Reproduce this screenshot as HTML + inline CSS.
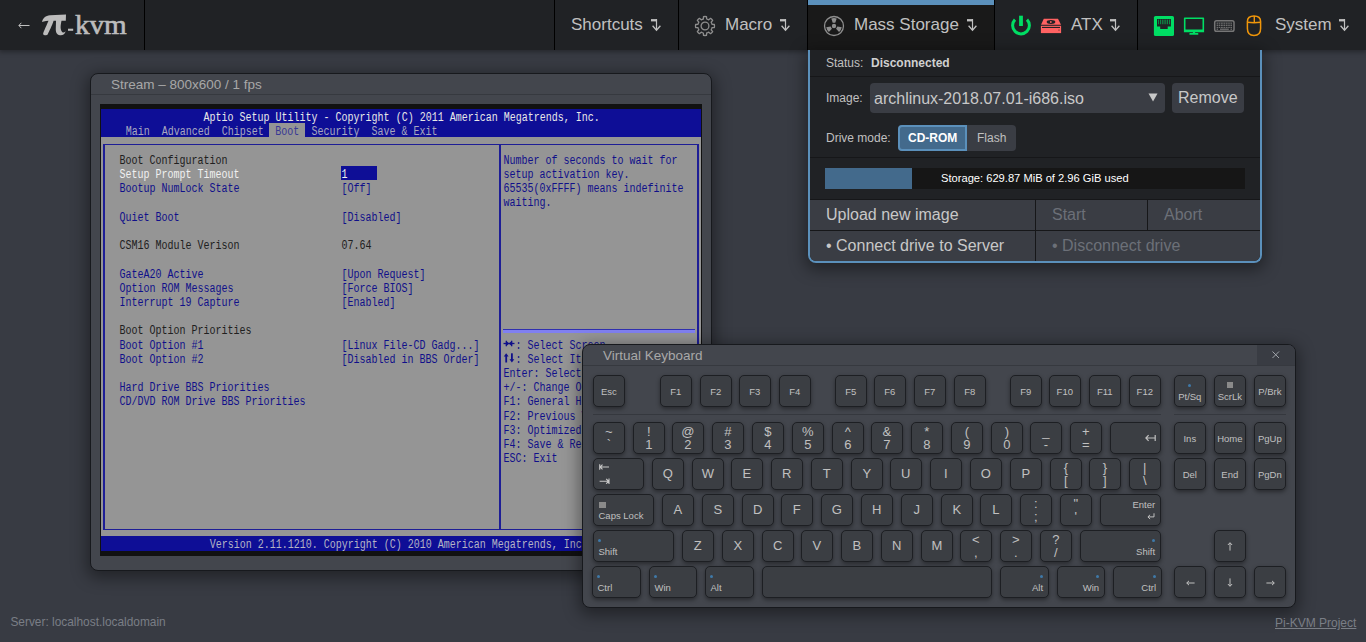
<!DOCTYPE html>
<html><head><meta charset="utf-8">
<style>
*{box-sizing:border-box;margin:0;padding:0}
html,body{width:1366px;height:642px;overflow:hidden;background:#383b43;font-family:"Liberation Sans", sans-serif;color:#c0c0c0}
.a{position:absolute}
.t{position:absolute;white-space:pre;line-height:1}
.key{position:absolute;background:#3b3e43;border:1px solid #1d1f23;border-radius:5px;box-shadow:0 2px 4px 0 rgba(0,0,0,0.4);color:#c0c0c0}
.bios{position:absolute;white-space:pre;font-family:"Liberation Mono", monospace;font-size:10px;line-height:10px;transform-origin:0 7.67px;transform:scaleY(1.2)}
</style></head><body>

<div class="a" style="left:0;top:0;width:1366px;height:50px;background:#202225;box-shadow:0 1px 5px 1px rgba(0,0,0,0.35)"></div>
<svg class="a" style="left:18px;top:22px" width="12" height="7" viewBox="0 0 12 7"><path d="M1 3.5 H11.5" stroke="#c0c0c0" stroke-width="1"/><path d="M3.3 0.8 L0.9 3.5 L3.3 6.2" fill="none" stroke="#c0c0c0" stroke-width="1"/></svg>
<svg class="a" style="left:36px;top:8px" width="96" height="34" viewBox="0 0 960 340">
<path fill="#bcbcbc" d="M60 140 C70 100 95 75 140 72 L300 66 L298 128 L255 128 C245 175 240 215 262 240 C272 250 285 245 296 232 C290 262 268 275 240 272 C205 268 196 240 198 200 L200 128 L176 128 C160 180 130 235 118 262 C110 275 80 278 72 262 C68 250 95 200 125 128 L100 130 C85 130 70 138 60 140 Z"/>
<rect x="320" y="207" width="52" height="21" fill="#bcbcbc"/></svg>
<div class="t" style="left:74.5px;top:11px;font-family:'Liberation Serif',serif;font-size:26px;color:#bcbcbc;-webkit-text-stroke:0.6px #bcbcbc;transform:scale(1.12,1.08);transform-origin:0 0">kvm</div>
<div class="a" style="left:144px;top:0;width:1px;height:50px;background:#000"></div>
<div class="a" style="left:554px;top:0;width:1px;height:50px;background:#000"></div>
<div class="a" style="left:678px;top:0;width:1px;height:50px;background:#000"></div>
<div class="a" style="left:807px;top:0;width:1px;height:50px;background:#000"></div>
<div class="a" style="left:994px;top:0;width:1px;height:50px;background:#000"></div>
<div class="a" style="left:1137px;top:0;width:1px;height:50px;background:#000"></div>
<div class="a" style="left:808px;top:0;width:186px;height:50px;background:#191919"></div>
<div class="a" style="left:808px;top:0;width:186px;height:5px;background:#5b90bb"></div>
<div class="t" style="left:571px;top:16px;font-size:17px;color:#c0c0c0">Shortcuts</div>
<svg style="position:absolute;left:651px;top:18px" width="10" height="14" viewBox="0 0 10 14"><rect x="0" y="1.1" width="6" height="2.3" fill="#c0c0c0"/><rect x="4.9" y="1.1" width="1.2" height="11" fill="#c0c0c0"/><path d="M1.6 7.8 L5.5 12.2 L9.4 7.8" fill="none" stroke="#c0c0c0" stroke-width="1.3"/></svg>
<div class="t" style="left:725px;top:16px;font-size:17px;color:#c0c0c0">Macro</div>
<svg style="position:absolute;left:780px;top:18px" width="10" height="14" viewBox="0 0 10 14"><rect x="0" y="1.1" width="6" height="2.3" fill="#c0c0c0"/><rect x="4.9" y="1.1" width="1.2" height="11" fill="#c0c0c0"/><path d="M1.6 7.8 L5.5 12.2 L9.4 7.8" fill="none" stroke="#c0c0c0" stroke-width="1.3"/></svg>
<div class="t" style="left:854px;top:16px;font-size:17px;color:#c0c0c0">Mass Storage</div>
<svg style="position:absolute;left:967px;top:18px" width="10" height="14" viewBox="0 0 10 14"><rect x="0" y="1.1" width="6" height="2.3" fill="#c0c0c0"/><rect x="4.9" y="1.1" width="1.2" height="11" fill="#c0c0c0"/><path d="M1.6 7.8 L5.5 12.2 L9.4 7.8" fill="none" stroke="#c0c0c0" stroke-width="1.3"/></svg>
<div class="t" style="left:1071px;top:16px;font-size:17px;color:#c0c0c0">ATX</div>
<svg style="position:absolute;left:1110px;top:18px" width="10" height="14" viewBox="0 0 10 14"><rect x="0" y="1.1" width="6" height="2.3" fill="#c0c0c0"/><rect x="4.9" y="1.1" width="1.2" height="11" fill="#c0c0c0"/><path d="M1.6 7.8 L5.5 12.2 L9.4 7.8" fill="none" stroke="#c0c0c0" stroke-width="1.3"/></svg>
<div class="t" style="left:1275px;top:16px;font-size:17px;color:#c0c0c0">System</div>
<svg style="position:absolute;left:1339px;top:18px" width="10" height="14" viewBox="0 0 10 14"><rect x="0" y="1.1" width="6" height="2.3" fill="#c0c0c0"/><rect x="4.9" y="1.1" width="1.2" height="11" fill="#c0c0c0"/><path d="M1.6 7.8 L5.5 12.2 L9.4 7.8" fill="none" stroke="#c0c0c0" stroke-width="1.3"/></svg>
<svg class="a" style="left:694px;top:15px" width="22" height="22" viewBox="0 0 22 22">
<g fill="none" stroke="#8e8e8e" stroke-width="1.3" stroke-linejoin="round">
<path d="M8.25 4.35 A7.2 7.2 0 0 1 9.32 4.00 L9.51 1.62 A9.5 9.5 0 0 1 12.49 1.62 L12.68 4.00 L13.76 4.35 A7.2 7.2 0 0 1 14.76 4.86 L16.58 3.31 A9.5 9.5 0 0 1 18.69 5.42 L17.14 7.24 L17.65 8.25 A7.2 7.2 0 0 1 18.00 9.32 L20.38 9.51 A9.5 9.5 0 0 1 20.38 12.49 L18.00 12.68 L17.65 13.76 A7.2 7.2 0 0 1 17.14 14.76 L18.69 16.58 A9.5 9.5 0 0 1 16.58 18.69 L14.76 17.14 L13.75 17.65 A7.2 7.2 0 0 1 12.68 18.00 L12.49 20.38 A9.5 9.5 0 0 1 9.51 20.38 L9.32 18.00 L8.24 17.65 A7.2 7.2 0 0 1 7.24 17.14 L5.42 18.69 A9.5 9.5 0 0 1 3.31 16.58 L4.86 14.76 L4.35 13.75 A7.2 7.2 0 0 1 4.00 12.68 L1.62 12.49 A9.5 9.5 0 0 1 1.62 9.51 L4.00 9.32 L4.35 8.24 A7.2 7.2 0 0 1 4.86 7.24 L3.31 5.42 A9.5 9.5 0 0 1 5.42 3.31 L7.24 4.86 Z"/>
<circle cx="11" cy="11" r="3.9"/></g></svg>
<svg class="a" style="left:823px;top:15px" width="22" height="22" viewBox="0 0 22 22">
<circle cx="11" cy="11" r="9.5" fill="none" stroke="#8e8e8e" stroke-width="1.3"/>
<g fill="#8e8e8e"><path d="M9.73 7.85 L8.30 3.58 A7.9 7.9 0 0 1 13.70 3.58 L12.27 7.85 Z"/><path d="M14.37 11.47 L18.78 12.37 A7.9 7.9 0 0 1 16.08 17.05 L13.09 13.68 Z"/><path d="M8.91 13.68 L5.92 17.05 A7.9 7.9 0 0 1 3.22 12.37 L7.63 11.47 Z"/><circle cx="11" cy="11" r="2.2"/></g></svg>
<svg class="a" style="left:1010px;top:15px" width="22" height="22" viewBox="0 0 22 22">
<path d="M5.0 4.6 A8.4 8.4 0 1 0 17.0 4.6" fill="none" stroke="#00de64" stroke-width="3"/>
<rect x="9.1" y="0.7" width="3.8" height="10.3" fill="#00de64"/></svg>
<svg class="a" style="left:1040px;top:18px" width="22" height="16" viewBox="0 0 22 16">
<path d="M3.8 0.8 H18 L21 6.7 H1 Z" fill="#ff6262"/>
<rect x="0.9" y="7.8" width="20.2" height="7.3" fill="#ff6262"/>
<ellipse cx="11" cy="4" rx="4.3" ry="1.9" fill="#202225"/><rect x="10" y="3.2" width="1.6" height="1.6" fill="#ff6262"/>
<rect x="2" y="8.9" width="18" height="1.1" fill="#202225"/><circle cx="19" cy="12" r="0.6" fill="#202225"/></svg>
<svg class="a" style="left:1153px;top:15px" width="22" height="22" viewBox="0 0 22 22">
<rect x="0.9" y="0.9" width="20.1" height="20.1" rx="1.6" fill="#00de64"/>
<path d="M4 4 h13.9 v7.6 h-3.2 v2.4 h-7.5 v-2.4 h-3.2z" fill="#202225"/>
<g fill="#00de64" opacity="0.75"><rect x="5.3" y="4.6" width="0.7" height="4.6"/><rect x="7.1" y="4.6" width="0.7" height="4.6"/><rect x="8.9" y="4.6" width="0.7" height="4.6"/><rect x="10.7" y="4.6" width="0.7" height="4.6"/><rect x="12.5" y="4.6" width="0.7" height="4.6"/><rect x="14.3" y="4.6" width="0.7" height="4.6"/><rect x="16.1" y="4.6" width="0.7" height="4.6"/></g></svg>
<svg class="a" style="left:1183px;top:17px" width="22" height="19" viewBox="0 0 22 19">
<path d="M1.6 0.4 H20.4 Q21.1 0.4 21.1 1.1 V15.2 H0.9 V1.1 Q0.9 0.4 1.6 0.4 Z M2.5 1.9 V12.4 H19.5 V1.9 Z" fill="#00de64" fill-rule="evenodd"/>
<rect x="9.9" y="15" width="2.2" height="1.4" fill="#00de64"/><rect x="6.4" y="16.1" width="8.9" height="1.6" rx="0.5" fill="#00de64"/></svg>
<svg class="a" style="left:1213px;top:19px" width="22" height="14" viewBox="0 0 22 14">
<rect x="1.7" y="1.8" width="19.3" height="10.5" rx="1.8" fill="none" stroke="#767676" stroke-width="1.5"/>
<g fill="#767676"><rect x="3.6" y="3.6" width="15.4" height="1.1"/><rect x="3.6" y="5.6" width="15.4" height="1.3"/><rect x="3.6" y="7.8" width="15.4" height="1.1"/><rect x="7" y="9.6" width="8.8" height="1.2"/><rect x="3.6" y="9.6" width="1.5" height="1.2"/><rect x="17.5" y="9.6" width="1.5" height="1.2"/></g>
<g fill="#202225"><rect x="5" y="3.4" width="0.6" height="5.6"/><rect x="7.4" y="3.4" width="0.6" height="5.6"/><rect x="9.8" y="3.4" width="0.6" height="5.6"/><rect x="12.2" y="3.4" width="0.6" height="5.6"/><rect x="14.6" y="3.4" width="0.6" height="5.6"/><rect x="16.8" y="3.4" width="0.6" height="5.6"/></g></svg>
<svg class="a" style="left:1246px;top:15px" width="16" height="22" viewBox="0 0 16 22">
<path d="M8 1 C12.5 1 14.6 2.5 14.6 6.5 V13.5 C14.6 18.2 12 20.5 8 20.5 C4 20.5 1.4 18.2 1.4 13.5 V6.5 C1.4 2.5 3.5 1 8 1 Z" fill="none" stroke="#f0960a" stroke-width="1.5"/>
<path d="M1.4 7.3 Q8 8.2 14.6 7.3 M8.3 1 V7.8" fill="none" stroke="#f0960a" stroke-width="1.4"/></svg>
<div class="a" style="left:90px;top:73px;width:622px;height:498px;background:#43464d;border:1px solid #17191d;border-radius:8px;box-shadow:0 4px 16px 3px rgba(0,0,0,0.4)"></div>
<div class="a" style="left:91px;top:94px;width:620px;height:1px;background:#36393f"></div>
<div class="t" style="left:111px;top:78px;font-size:13.5px;color:#a8a8a8">Stream – 800x600 / 1 fps</div>
<div class="a" style="left:100px;top:104px;width:602px;height:452px;background:#111;overflow:hidden">
<div class="a" style="left:1px;top:5px;width:600px;height:28px;background:#0e0e96"></div>
<div class="a" style="left:1px;top:33px;width:600px;height:399px;background:#959595"></div>
<div class="a" style="left:1px;top:432px;width:600px;height:14.5px;background:#0e0e96"></div>
<div class="a" style="left:169px;top:19px;width:36px;height:14px;background:#959595"></div>
<div class="a" style="left:3.3px;top:40px;width:595.4px;height:1.4px;background:#1e1e96"></div>
<div class="a" style="left:3.3px;top:40px;width:2px;height:386px;background:#1e1e96"></div>
<div class="a" style="left:3.3px;top:424.8px;width:595.4px;height:1.3px;background:#1e1e96"></div>
<div class="a" style="left:597.1px;top:40px;width:1.6px;height:386px;background:#1e1e96"></div>
<div class="a" style="left:399px;top:40px;width:2px;height:386px;background:#1e1e96"></div>
<div class="a" style="left:403px;top:224.5px;width:192px;height:1px;background:#3030b0"></div>
<div class="a" style="left:403px;top:226px;width:192px;height:3px;background:#8080f0"></div>
<div class="a" style="left:241px;top:62px;width:36px;height:14px;background:#0e0e96"></div>
<div class="bios" style="left:103.6px;top:9.93px;color:#e8e8e8">Aptio Setup Utility - Copyright (C) 2011 American Megatrends, Inc.</div>
<div class="bios" style="left:25.7px;top:24.03px;color:#a8a8c0">Main  Advanced  Chipset</div>
<div class="bios" style="left:175.3px;top:24.03px;color:#383894">Boot</div>
<div class="bios" style="left:211.4px;top:24.03px;color:#a8a8c0">Security  Save &amp; Exit</div>
<div class="bios" style="left:19.5px;top:52.83px;color:#202020">Boot Configuration</div>
<div class="bios" style="left:19.5px;top:67.04px;color:#f0f0f0">Setup Prompt Timeout</div>
<div class="bios" style="left:241.5px;top:67.04px;color:#f0f0f0">1</div>
<div class="bios" style="left:19.5px;top:81.25px;color:#10108a">Bootup NumLock State</div>
<div class="bios" style="left:241.5px;top:81.25px;color:#10108a">[Off]</div>
<div class="bios" style="left:19.5px;top:109.67px;color:#10108a">Quiet Boot</div>
<div class="bios" style="left:241.5px;top:109.67px;color:#10108a">[Disabled]</div>
<div class="bios" style="left:19.5px;top:138.09px;color:#202020">CSM16 Module Verison</div>
<div class="bios" style="left:241.5px;top:138.09px;color:#202020">07.64</div>
<div class="bios" style="left:19.5px;top:166.51px;color:#10108a">GateA20 Active</div>
<div class="bios" style="left:241.5px;top:166.51px;color:#10108a">[Upon Request]</div>
<div class="bios" style="left:19.5px;top:180.72px;color:#10108a">Option ROM Messages</div>
<div class="bios" style="left:241.5px;top:180.72px;color:#10108a">[Force BIOS]</div>
<div class="bios" style="left:19.5px;top:194.93px;color:#10108a">Interrupt 19 Capture</div>
<div class="bios" style="left:241.5px;top:194.93px;color:#10108a">[Enabled]</div>
<div class="bios" style="left:19.5px;top:223.35px;color:#202020">Boot Option Priorities</div>
<div class="bios" style="left:19.5px;top:237.56px;color:#10108a">Boot Option #1</div>
<div class="bios" style="left:241.5px;top:237.56px;color:#10108a">[Linux File-CD Gadg...]</div>
<div class="bios" style="left:19.5px;top:251.77px;color:#10108a">Boot Option #2</div>
<div class="bios" style="left:241.5px;top:251.77px;color:#10108a">[Disabled in BBS Order]</div>
<div class="bios" style="left:19.5px;top:280.19px;color:#10108a">Hard Drive BBS Priorities</div>
<div class="bios" style="left:19.5px;top:294.40px;color:#10108a">CD/DVD ROM Drive BBS Priorities</div>
<div class="bios" style="left:403.6px;top:52.83px;color:#10108a">Number of seconds to wait for</div>
<div class="bios" style="left:403.6px;top:67.04px;color:#10108a">setup activation key.</div>
<div class="bios" style="left:403.6px;top:81.25px;color:#10108a">65535(0xFFFF) means indefinite</div>
<div class="bios" style="left:403.6px;top:95.46px;color:#10108a">waiting.</div>
<div class="bios" style="left:403.6px;top:237.56px;color:#10108a">  : Select Screen</div>
<div class="bios" style="left:403.6px;top:251.77px;color:#10108a">  : Select Item</div>
<div class="bios" style="left:403.6px;top:265.98px;color:#10108a">Enter: Select</div>
<div class="bios" style="left:403.6px;top:280.19px;color:#10108a">+/-: Change Opt.</div>
<div class="bios" style="left:403.6px;top:294.40px;color:#10108a">F1: General Help</div>
<div class="bios" style="left:403.6px;top:308.61px;color:#10108a">F2: Previous Values</div>
<div class="bios" style="left:403.6px;top:322.82px;color:#10108a">F3: Optimized Defaults</div>
<div class="bios" style="left:403.6px;top:337.03px;color:#10108a">F4: Save &amp; Reset</div>
<div class="bios" style="left:403.6px;top:351.24px;color:#10108a">ESC: Exit</div>
<svg class="a" style="left:403px;top:235px" width="12" height="9" viewBox="0 0 12 9"><g fill="none" stroke="#10108a" stroke-width="1.3"><path d="M0.5 4.5 H11.5"/><path d="M3.3 1.8 V7.2 M8.7 1.8 V7.2"/></g><g fill="#10108a"><path d="M3.2 1.7 L6.2 4.5 L3.2 7.3Z"/><path d="M8.8 1.7 L5.8 4.5 L8.8 7.3Z"/></g></svg>
<svg class="a" style="left:403px;top:248.5px" width="12" height="10" viewBox="0 0 12 10"><g fill="#10108a"><rect x="2.3" y="2.5" width="1.8" height="7"/><path d="M0.8 3.5 L3.2 0.3 L5.6 3.5Z"/><rect x="8" y="0.3" width="1.8" height="7"/><path d="M6.5 6.3 L8.9 9.5 L11.3 6.3Z"/></g></svg>
<div class="bios" style="left:109.7px;top:437.43px;color:#b4b4c4">Version 2.11.1210. Copyright (C) 2010 American Megatrends, Inc.</div>
</div>
<div class="a" style="left:808px;top:50px;width:454px;height:213px;background:#202225;border:2px solid #5b90bb;border-top:none;border-radius:0 0 8px 8px;box-shadow:0 4px 16px 3px rgba(0,0,0,0.4);overflow:hidden">
<div class="a" style="left:0;top:26px;width:450px;height:1px;background:#161719"></div>
<div class="t" style="left:16px;top:4px"><span style="font-size:12px;color:#c0c0c0">Status:</span></div>
<div class="t" style="left:61px;top:4px"><span style="font-size:12px;font-weight:bold;color:#d0d0d0">Disconnected</span></div>
<div class="t" style="left:16px;top:39px"><span style="font-size:12px;color:#c0c0c0">Image:</span></div>
<div class="a" style="left:60px;top:33px;width:295px;height:30px;background:#3a3d44;border-radius:4px"></div>
<div class="t" style="left:64px;top:41px"><span style="font-size:16px;color:#c8c8c8">archlinux-2018.07.01-i686.iso</span></div>
<svg class="a" style="left:338px;top:43px" width="10" height="9" viewBox="0 0 10 9"><path d="M0.5 0.5 H9.5 L5 8.5z" fill="#c8c8c8"/></svg>
<div class="a" style="left:362px;top:33px;width:72px;height:30px;background:#3a3d44;border-radius:4px"></div>
<div class="t" style="left:368px;top:40px"><span style="font-size:16px;color:#c8c8c8">Remove</span></div>
<div class="t" style="left:16px;top:79px"><span style="font-size:12px;color:#c0c0c0">Drive mode:</span></div>
<div class="a" style="left:88px;top:75px;width:118px;height:26px;background:#3a3d44;border-radius:4px"></div>
<div class="a" style="left:88px;top:75px;width:69px;height:26px;background:#436a8c;border:2px solid #5b90bb;border-radius:4px 0 0 4px"></div>
<div class="t" style="left:98px;top:79px"><span style="font-size:12px;font-weight:bold;color:#ffffff">CD-ROM</span></div>
<div class="t" style="left:167px;top:79px"><span style="font-size:12px;color:#c0c0c0">Flash</span></div>
<div class="a" style="left:0;top:107px;width:450px;height:1px;background:#161719"></div>
<div class="a" style="left:15px;top:118px;width:420px;height:21px;background:#161616"></div>
<div class="a" style="left:15px;top:118px;width:87px;height:21px;background:#436a8c"></div>
<div class="t" style="left:131px;top:119px"><span style="font-size:11.15px;color:#ffffff">Storage: 629.87 MiB of 2.96 GiB used</span></div>
<div class="a" style="left:0;top:149px;width:450px;height:63px;background:#3a3d44"></div>
<div class="a" style="left:0;top:149px;width:450px;height:1px;background:#161719"></div>
<div class="a" style="left:0;top:180px;width:450px;height:1px;background:#161719"></div>
<div class="a" style="left:225px;top:149px;width:1px;height:63px;background:#161719"></div>
<div class="a" style="left:337px;top:149px;width:1px;height:32px;background:#161719"></div>
<div class="t" style="left:16px;top:157px"><span style="font-size:16px;color:#c8c8c8">Upload new image</span></div>
<div class="t" style="left:242px;top:157px"><span style="font-size:16px;color:#6c7078">Start</span></div>
<div class="t" style="left:354px;top:157px"><span style="font-size:16px;color:#6c7078">Abort</span></div>
<div class="t" style="left:16px;top:188px"><span style="font-size:16px;color:#c8c8c8">• Connect drive to Server</span></div>
<div class="t" style="left:242px;top:188px"><span style="font-size:16px;color:#6c7078">• Disconnect drive</span></div>
</div>
<div class="a" style="left:582px;top:344px;width:714px;height:264px;background:#43464d;border:1px solid #17191d;border-radius:8px;box-shadow:0 4px 16px 3px rgba(0,0,0,0.4);overflow:hidden">
<div class="a" style="left:0;top:20px;width:712px;height:1px;background:#36393f"></div>
<div class="a" style="left:674px;top:0;width:38px;height:20px;background:#393c43"></div>
</div>
<div class="t" style="left:603px;top:349px;font-size:13.5px;color:#a8a8a8">Virtual Keyboard</div>
<svg class="a" style="left:1272px;top:350.5px" width="7.5" height="7.5" viewBox="0 0 7.5 7.5"><path d="M0.5 0.5 L7 7 M7 0.5 L0.5 7" stroke="#a0a4aa" stroke-width="1"/></svg>
<div class="a" style="left:593px;top:414px;width:568px;height:1px;background:#35383e"></div>
<div class="a" style="left:1174px;top:414px;width:112px;height:1px;background:#35383e"></div>
<div class="key" style="left:593.0px;top:375.0px;width:31.6px;height:31.6px"><div style="position:absolute;left:-1px;right:-1px;top:11.36px;text-align:center;font-size:9.5px;line-height:1">Esc</div></div>
<div class="key" style="left:660.0px;top:375.0px;width:31.6px;height:31.6px"><div style="position:absolute;left:-1px;right:-1px;top:11.36px;text-align:center;font-size:9.5px;line-height:1">F1</div></div>
<div class="key" style="left:700.0px;top:375.0px;width:31.6px;height:31.6px"><div style="position:absolute;left:-1px;right:-1px;top:11.36px;text-align:center;font-size:9.5px;line-height:1">F2</div></div>
<div class="key" style="left:739.0px;top:375.0px;width:31.6px;height:31.6px"><div style="position:absolute;left:-1px;right:-1px;top:11.36px;text-align:center;font-size:9.5px;line-height:1">F3</div></div>
<div class="key" style="left:779.0px;top:375.0px;width:31.6px;height:31.6px"><div style="position:absolute;left:-1px;right:-1px;top:11.36px;text-align:center;font-size:9.5px;line-height:1">F4</div></div>
<div class="key" style="left:835.0px;top:375.0px;width:31.6px;height:31.6px"><div style="position:absolute;left:-1px;right:-1px;top:11.36px;text-align:center;font-size:9.5px;line-height:1">F5</div></div>
<div class="key" style="left:874.0px;top:375.0px;width:31.6px;height:31.6px"><div style="position:absolute;left:-1px;right:-1px;top:11.36px;text-align:center;font-size:9.5px;line-height:1">F6</div></div>
<div class="key" style="left:914.0px;top:375.0px;width:31.6px;height:31.6px"><div style="position:absolute;left:-1px;right:-1px;top:11.36px;text-align:center;font-size:9.5px;line-height:1">F7</div></div>
<div class="key" style="left:954.0px;top:375.0px;width:31.6px;height:31.6px"><div style="position:absolute;left:-1px;right:-1px;top:11.36px;text-align:center;font-size:9.5px;line-height:1">F8</div></div>
<div class="key" style="left:1010.0px;top:375.0px;width:31.6px;height:31.6px"><div style="position:absolute;left:-1px;right:-1px;top:11.36px;text-align:center;font-size:9.5px;line-height:1">F9</div></div>
<div class="key" style="left:1049.0px;top:375.0px;width:31.6px;height:31.6px"><div style="position:absolute;left:-1px;right:-1px;top:11.36px;text-align:center;font-size:9.5px;line-height:1">F10</div></div>
<div class="key" style="left:1089.0px;top:375.0px;width:31.6px;height:31.6px"><div style="position:absolute;left:-1px;right:-1px;top:11.36px;text-align:center;font-size:9.5px;line-height:1">F11</div></div>
<div class="key" style="left:1129.0px;top:375.0px;width:31.6px;height:31.6px"><div style="position:absolute;left:-1px;right:-1px;top:11.36px;text-align:center;font-size:9.5px;line-height:1">F12</div></div>
<div class="key" style="left:1174.0px;top:375.0px;width:31.6px;height:31.6px"><div style="position:absolute;left:13.2px;top:7.9px;width:3px;height:3px;border-radius:50%;background:#3f79a8"></div><div style="position:absolute;left:-1px;right:-1px;top:16.26px;text-align:center;font-size:9.5px;line-height:1">Pt/Sq</div></div>
<div class="key" style="left:1214.0px;top:375.0px;width:31.6px;height:31.6px"><div style="position:absolute;left:12.2px;top:5.5px;width:6px;height:6px;background:#8a8a8a"></div><div style="position:absolute;left:-1px;right:-1px;top:16.26px;text-align:center;font-size:9.5px;line-height:1">ScrLk</div></div>
<div class="key" style="left:1254.0px;top:375.0px;width:31.6px;height:31.6px"><div style="position:absolute;left:-1px;right:-1px;top:11.36px;text-align:center;font-size:9.5px;line-height:1">P/Brk</div></div>
<div class="key" style="left:593.0px;top:422.0px;width:31.6px;height:31.6px"><div style="position:absolute;left:-1px;right:-1px;top:1.50px;text-align:center;font-size:13px;line-height:1">~</div><div style="position:absolute;left:-1px;right:-1px;top:14.70px;text-align:center;font-size:13px;line-height:1">`</div></div>
<div class="key" style="left:633.0px;top:422.0px;width:31.6px;height:31.6px"><div style="position:absolute;left:-1px;right:-1px;top:1.50px;text-align:center;font-size:13px;line-height:1">!</div><div style="position:absolute;left:-1px;right:-1px;top:14.70px;text-align:center;font-size:13px;line-height:1">1</div></div>
<div class="key" style="left:672.0px;top:422.0px;width:31.6px;height:31.6px"><div style="position:absolute;left:-1px;right:-1px;top:1.50px;text-align:center;font-size:13px;line-height:1">@</div><div style="position:absolute;left:-1px;right:-1px;top:14.70px;text-align:center;font-size:13px;line-height:1">2</div></div>
<div class="key" style="left:712.0px;top:422.0px;width:31.6px;height:31.6px"><div style="position:absolute;left:-1px;right:-1px;top:1.50px;text-align:center;font-size:13px;line-height:1">#</div><div style="position:absolute;left:-1px;right:-1px;top:14.70px;text-align:center;font-size:13px;line-height:1">3</div></div>
<div class="key" style="left:752.0px;top:422.0px;width:31.6px;height:31.6px"><div style="position:absolute;left:-1px;right:-1px;top:1.50px;text-align:center;font-size:13px;line-height:1">$</div><div style="position:absolute;left:-1px;right:-1px;top:14.70px;text-align:center;font-size:13px;line-height:1">4</div></div>
<div class="key" style="left:792.0px;top:422.0px;width:31.6px;height:31.6px"><div style="position:absolute;left:-1px;right:-1px;top:1.50px;text-align:center;font-size:13px;line-height:1">%</div><div style="position:absolute;left:-1px;right:-1px;top:14.70px;text-align:center;font-size:13px;line-height:1">5</div></div>
<div class="key" style="left:832.0px;top:422.0px;width:31.6px;height:31.6px"><div style="position:absolute;left:-1px;right:-1px;top:1.50px;text-align:center;font-size:13px;line-height:1">^</div><div style="position:absolute;left:-1px;right:-1px;top:14.70px;text-align:center;font-size:13px;line-height:1">6</div></div>
<div class="key" style="left:871.0px;top:422.0px;width:31.6px;height:31.6px"><div style="position:absolute;left:-1px;right:-1px;top:1.50px;text-align:center;font-size:13px;line-height:1">&amp;</div><div style="position:absolute;left:-1px;right:-1px;top:14.70px;text-align:center;font-size:13px;line-height:1">7</div></div>
<div class="key" style="left:911.0px;top:422.0px;width:31.6px;height:31.6px"><div style="position:absolute;left:-1px;right:-1px;top:1.50px;text-align:center;font-size:13px;line-height:1">*</div><div style="position:absolute;left:-1px;right:-1px;top:14.70px;text-align:center;font-size:13px;line-height:1">8</div></div>
<div class="key" style="left:951.0px;top:422.0px;width:31.6px;height:31.6px"><div style="position:absolute;left:-1px;right:-1px;top:1.50px;text-align:center;font-size:13px;line-height:1">(</div><div style="position:absolute;left:-1px;right:-1px;top:14.70px;text-align:center;font-size:13px;line-height:1">9</div></div>
<div class="key" style="left:991.0px;top:422.0px;width:31.6px;height:31.6px"><div style="position:absolute;left:-1px;right:-1px;top:1.50px;text-align:center;font-size:13px;line-height:1">)</div><div style="position:absolute;left:-1px;right:-1px;top:14.70px;text-align:center;font-size:13px;line-height:1">0</div></div>
<div class="key" style="left:1030.0px;top:422.0px;width:31.6px;height:31.6px"><div style="position:absolute;left:-1px;right:-1px;top:1.50px;text-align:center;font-size:13px;line-height:1">_</div><div style="position:absolute;left:-1px;right:-1px;top:14.70px;text-align:center;font-size:13px;line-height:1">-</div></div>
<div class="key" style="left:1070.0px;top:422.0px;width:31.6px;height:31.6px"><div style="position:absolute;left:-1px;right:-1px;top:1.50px;text-align:center;font-size:13px;line-height:1">+</div><div style="position:absolute;left:-1px;right:-1px;top:14.70px;text-align:center;font-size:13px;line-height:1">=</div></div>
<div class="key" style="left:1110.0px;top:422.0px;width:50.6px;height:31.6px"><svg style="position:absolute;left:34px;top:11.3px" width="11" height="8" viewBox="0 0 11 8"><path d="M0.8 4 H10.2 M10.2 1 V7 M3.6 1.2 L0.9 4 L3.6 6.8" fill="none" stroke="#c0c0c0" stroke-width="1.2"/></svg></div>
<div class="key" style="left:1174.0px;top:422.0px;width:31.6px;height:31.6px"><div style="position:absolute;left:-1px;right:-1px;top:10.86px;text-align:center;font-size:9.5px;line-height:1">Ins</div></div>
<div class="key" style="left:1214.0px;top:422.0px;width:31.6px;height:31.6px"><div style="position:absolute;left:-1px;right:-1px;top:10.86px;text-align:center;font-size:9.5px;line-height:1">Home</div></div>
<div class="key" style="left:1254.0px;top:422.0px;width:31.6px;height:31.6px"><div style="position:absolute;left:-1px;right:-1px;top:10.86px;text-align:center;font-size:9.5px;line-height:1">PgUp</div></div>
<div class="key" style="left:593.0px;top:458.0px;width:50.6px;height:31.6px"><svg style="position:absolute;left:5px;top:1.2px" width="12" height="24" viewBox="0 0 12 24"><path d="M0.7 4.3 V9.7 M0.9 7 H10 M3.5 4.6 L1.1 7 L3.5 9.4" fill="none" stroke="#c8c8c8" stroke-width="1.1"/><path d="M10 18.6 V24 M0.6 21.3 H9.8 M7.2 18.9 L9.6 21.3 L7.2 23.7" fill="none" stroke="#c8c8c8" stroke-width="1.1"/></svg></div>
<div class="key" style="left:652.0px;top:458.0px;width:31.6px;height:31.6px"><div style="position:absolute;left:-1px;right:-1px;top:7.70px;text-align:center;font-size:13px;line-height:1">Q</div></div>
<div class="key" style="left:692.0px;top:458.0px;width:31.6px;height:31.6px"><div style="position:absolute;left:-1px;right:-1px;top:7.70px;text-align:center;font-size:13px;line-height:1">W</div></div>
<div class="key" style="left:731.0px;top:458.0px;width:31.6px;height:31.6px"><div style="position:absolute;left:-1px;right:-1px;top:7.70px;text-align:center;font-size:13px;line-height:1">E</div></div>
<div class="key" style="left:771.0px;top:458.0px;width:31.6px;height:31.6px"><div style="position:absolute;left:-1px;right:-1px;top:7.70px;text-align:center;font-size:13px;line-height:1">R</div></div>
<div class="key" style="left:811.0px;top:458.0px;width:31.6px;height:31.6px"><div style="position:absolute;left:-1px;right:-1px;top:7.70px;text-align:center;font-size:13px;line-height:1">T</div></div>
<div class="key" style="left:851.0px;top:458.0px;width:31.6px;height:31.6px"><div style="position:absolute;left:-1px;right:-1px;top:7.70px;text-align:center;font-size:13px;line-height:1">Y</div></div>
<div class="key" style="left:890.0px;top:458.0px;width:31.6px;height:31.6px"><div style="position:absolute;left:-1px;right:-1px;top:7.70px;text-align:center;font-size:13px;line-height:1">U</div></div>
<div class="key" style="left:930.0px;top:458.0px;width:31.6px;height:31.6px"><div style="position:absolute;left:-1px;right:-1px;top:7.70px;text-align:center;font-size:13px;line-height:1">I</div></div>
<div class="key" style="left:970.0px;top:458.0px;width:31.6px;height:31.6px"><div style="position:absolute;left:-1px;right:-1px;top:7.70px;text-align:center;font-size:13px;line-height:1">O</div></div>
<div class="key" style="left:1010.0px;top:458.0px;width:31.6px;height:31.6px"><div style="position:absolute;left:-1px;right:-1px;top:7.70px;text-align:center;font-size:13px;line-height:1">P</div></div>
<div class="key" style="left:1050.0px;top:458.0px;width:31.6px;height:31.6px"><div style="position:absolute;left:-1px;right:-1px;top:1.50px;text-align:center;font-size:13px;line-height:1">{</div><div style="position:absolute;left:-1px;right:-1px;top:14.70px;text-align:center;font-size:13px;line-height:1">[</div></div>
<div class="key" style="left:1089.0px;top:458.0px;width:31.6px;height:31.6px"><div style="position:absolute;left:-1px;right:-1px;top:1.50px;text-align:center;font-size:13px;line-height:1">}</div><div style="position:absolute;left:-1px;right:-1px;top:14.70px;text-align:center;font-size:13px;line-height:1">]</div></div>
<div class="key" style="left:1129.0px;top:458.0px;width:31.6px;height:31.6px"><div style="position:absolute;left:-1px;right:-1px;top:1.50px;text-align:center;font-size:13px;line-height:1">|</div><div style="position:absolute;left:-1px;right:-1px;top:14.70px;text-align:center;font-size:13px;line-height:1">\</div></div>
<div class="key" style="left:1174.0px;top:458.0px;width:31.6px;height:31.6px"><div style="position:absolute;left:-1px;right:-1px;top:10.86px;text-align:center;font-size:9.5px;line-height:1">Del</div></div>
<div class="key" style="left:1214.0px;top:458.0px;width:31.6px;height:31.6px"><div style="position:absolute;left:-1px;right:-1px;top:10.86px;text-align:center;font-size:9.5px;line-height:1">End</div></div>
<div class="key" style="left:1254.0px;top:458.0px;width:31.6px;height:31.6px"><div style="position:absolute;left:-1px;right:-1px;top:10.86px;text-align:center;font-size:9.5px;line-height:1">PgDn</div></div>
<div class="key" style="left:593.0px;top:494.0px;width:60.6px;height:31.6px"><div style="position:absolute;left:5.4px;top:6.7px;width:7px;height:6.5px;background:#8a8a8a"></div><div style="position:absolute;left:4.5px;top:16.16px;font-size:9.5px;line-height:1">Caps Lock</div></div>
<div class="key" style="left:662.0px;top:494.0px;width:31.6px;height:31.6px"><div style="position:absolute;left:-1px;right:-1px;top:7.70px;text-align:center;font-size:13px;line-height:1">A</div></div>
<div class="key" style="left:702.0px;top:494.0px;width:31.6px;height:31.6px"><div style="position:absolute;left:-1px;right:-1px;top:7.70px;text-align:center;font-size:13px;line-height:1">S</div></div>
<div class="key" style="left:742.0px;top:494.0px;width:31.6px;height:31.6px"><div style="position:absolute;left:-1px;right:-1px;top:7.70px;text-align:center;font-size:13px;line-height:1">D</div></div>
<div class="key" style="left:781.0px;top:494.0px;width:31.6px;height:31.6px"><div style="position:absolute;left:-1px;right:-1px;top:7.70px;text-align:center;font-size:13px;line-height:1">F</div></div>
<div class="key" style="left:821.0px;top:494.0px;width:31.6px;height:31.6px"><div style="position:absolute;left:-1px;right:-1px;top:7.70px;text-align:center;font-size:13px;line-height:1">G</div></div>
<div class="key" style="left:861.0px;top:494.0px;width:31.6px;height:31.6px"><div style="position:absolute;left:-1px;right:-1px;top:7.70px;text-align:center;font-size:13px;line-height:1">H</div></div>
<div class="key" style="left:901.0px;top:494.0px;width:31.6px;height:31.6px"><div style="position:absolute;left:-1px;right:-1px;top:7.70px;text-align:center;font-size:13px;line-height:1">J</div></div>
<div class="key" style="left:941.0px;top:494.0px;width:31.6px;height:31.6px"><div style="position:absolute;left:-1px;right:-1px;top:7.70px;text-align:center;font-size:13px;line-height:1">K</div></div>
<div class="key" style="left:980.0px;top:494.0px;width:31.6px;height:31.6px"><div style="position:absolute;left:-1px;right:-1px;top:7.70px;text-align:center;font-size:13px;line-height:1">L</div></div>
<div class="key" style="left:1020.0px;top:494.0px;width:31.6px;height:31.6px"><div style="position:absolute;left:-1px;right:-1px;top:1.50px;text-align:center;font-size:13px;line-height:1">:</div><div style="position:absolute;left:-1px;right:-1px;top:14.70px;text-align:center;font-size:13px;line-height:1">;</div></div>
<div class="key" style="left:1060.0px;top:494.0px;width:31.6px;height:31.6px"><div style="position:absolute;left:-1px;right:-1px;top:1.50px;text-align:center;font-size:13px;line-height:1">"</div><div style="position:absolute;left:-1px;right:-1px;top:14.70px;text-align:center;font-size:13px;line-height:1">'</div></div>
<div class="key" style="left:1100.0px;top:494.0px;width:60.6px;height:31.6px"><div style="position:absolute;right:4.5px;top:4.56px;font-size:9.5px;line-height:1">Enter</div><svg style="position:absolute;left:46.2px;top:17.5px" width="8" height="7" viewBox="0 0 8 7"><path d="M7 0.3 V3.9 H1 M3.1 1.8 L0.9 3.9 L3.1 6" fill="none" stroke="#c0c0c0" stroke-width="1"/></svg></div>
<div class="key" style="left:593.0px;top:530.0px;width:80.6px;height:31.6px"><div style="position:absolute;left:4.3px;top:7.8px;width:3px;height:3px;border-radius:50%;background:#3f79a8"></div><div style="position:absolute;left:4.5px;top:15.66px;font-size:9.5px;line-height:1">Shift</div></div>
<div class="key" style="left:682.0px;top:530.0px;width:31.6px;height:31.6px"><div style="position:absolute;left:-1px;right:-1px;top:7.70px;text-align:center;font-size:13px;line-height:1">Z</div></div>
<div class="key" style="left:722.0px;top:530.0px;width:31.6px;height:31.6px"><div style="position:absolute;left:-1px;right:-1px;top:7.70px;text-align:center;font-size:13px;line-height:1">X</div></div>
<div class="key" style="left:762.0px;top:530.0px;width:31.6px;height:31.6px"><div style="position:absolute;left:-1px;right:-1px;top:7.70px;text-align:center;font-size:13px;line-height:1">C</div></div>
<div class="key" style="left:801.0px;top:530.0px;width:31.6px;height:31.6px"><div style="position:absolute;left:-1px;right:-1px;top:7.70px;text-align:center;font-size:13px;line-height:1">V</div></div>
<div class="key" style="left:841.0px;top:530.0px;width:31.6px;height:31.6px"><div style="position:absolute;left:-1px;right:-1px;top:7.70px;text-align:center;font-size:13px;line-height:1">B</div></div>
<div class="key" style="left:881.0px;top:530.0px;width:31.6px;height:31.6px"><div style="position:absolute;left:-1px;right:-1px;top:7.70px;text-align:center;font-size:13px;line-height:1">N</div></div>
<div class="key" style="left:921.0px;top:530.0px;width:31.6px;height:31.6px"><div style="position:absolute;left:-1px;right:-1px;top:7.70px;text-align:center;font-size:13px;line-height:1">M</div></div>
<div class="key" style="left:960.0px;top:530.0px;width:31.6px;height:31.6px"><div style="position:absolute;left:-1px;right:-1px;top:1.50px;text-align:center;font-size:13px;line-height:1">&lt;</div><div style="position:absolute;left:-1px;right:-1px;top:14.70px;text-align:center;font-size:13px;line-height:1">,</div></div>
<div class="key" style="left:1000.0px;top:530.0px;width:31.6px;height:31.6px"><div style="position:absolute;left:-1px;right:-1px;top:1.50px;text-align:center;font-size:13px;line-height:1">&gt;</div><div style="position:absolute;left:-1px;right:-1px;top:14.70px;text-align:center;font-size:13px;line-height:1">.</div></div>
<div class="key" style="left:1040.0px;top:530.0px;width:31.6px;height:31.6px"><div style="position:absolute;left:-1px;right:-1px;top:1.50px;text-align:center;font-size:13px;line-height:1">?</div><div style="position:absolute;left:-1px;right:-1px;top:14.70px;text-align:center;font-size:13px;line-height:1">/</div></div>
<div class="key" style="left:1080.0px;top:530.0px;width:80.6px;height:31.6px"><div style="position:absolute;left:71.3px;top:7.8px;width:3px;height:3px;border-radius:50%;background:#3f79a8"></div><div style="position:absolute;right:4.5px;top:15.66px;font-size:9.5px;line-height:1">Shift</div></div>
<div class="key" style="left:1214.0px;top:530.0px;width:31.6px;height:31.6px"><svg style="position:absolute;left:11.8px;top:10.8px" width="6" height="9" viewBox="0 0 6 9"><path d="M3 8.6 V0.9 M0.9 3 L3 0.7 L5.1 3" fill="none" stroke="#c0c0c0" stroke-width="1"/></svg></div>
<div class="key" style="left:592.0px;top:566.0px;width:48.6px;height:31.6px"><div style="position:absolute;left:4.3px;top:7.8px;width:3px;height:3px;border-radius:50%;background:#3f79a8"></div><div style="position:absolute;left:4.5px;top:15.86px;font-size:9.5px;line-height:1">Ctrl</div></div>
<div class="key" style="left:649.0px;top:566.0px;width:47.6px;height:31.6px"><div style="position:absolute;left:4.3px;top:7.8px;width:3px;height:3px;border-radius:50%;background:#3f79a8"></div><div style="position:absolute;left:4.5px;top:15.86px;font-size:9.5px;line-height:1">Win</div></div>
<div class="key" style="left:705.0px;top:566.0px;width:48.6px;height:31.6px"><div style="position:absolute;left:4.3px;top:7.8px;width:3px;height:3px;border-radius:50%;background:#3f79a8"></div><div style="position:absolute;left:4.5px;top:15.86px;font-size:9.5px;line-height:1">Alt</div></div>
<div class="key" style="left:762.0px;top:566.0px;width:229.6px;height:31.6px"></div>
<div class="key" style="left:1000.0px;top:566.0px;width:48.6px;height:31.6px"><div style="position:absolute;left:39.3px;top:7.8px;width:3px;height:3px;border-radius:50%;background:#3f79a8"></div><div style="position:absolute;right:4.5px;top:15.86px;font-size:9.5px;line-height:1">Alt</div></div>
<div class="key" style="left:1057.0px;top:566.0px;width:47.6px;height:31.6px"><div style="position:absolute;left:38.3px;top:7.8px;width:3px;height:3px;border-radius:50%;background:#3f79a8"></div><div style="position:absolute;right:4.5px;top:15.86px;font-size:9.5px;line-height:1">Win</div></div>
<div class="key" style="left:1113.0px;top:566.0px;width:48.6px;height:31.6px"><div style="position:absolute;left:39.3px;top:7.8px;width:3px;height:3px;border-radius:50%;background:#3f79a8"></div><div style="position:absolute;right:4.5px;top:15.86px;font-size:9.5px;line-height:1">Ctrl</div></div>
<div class="key" style="left:1174.0px;top:566.0px;width:31.6px;height:31.6px"><svg style="position:absolute;left:10.8px;top:12.6px" width="9" height="6" viewBox="0 0 9 6"><path d="M8.6 3 H0.9 M3 0.9 L0.7 3 L3 5.1" fill="none" stroke="#c0c0c0" stroke-width="1"/></svg></div>
<div class="key" style="left:1214.0px;top:566.0px;width:31.6px;height:31.6px"><svg style="position:absolute;left:11.8px;top:10.8px" width="6" height="9" viewBox="0 0 6 9"><path d="M3 0.4 V8.1 M0.9 6 L3 8.3 L5.1 6" fill="none" stroke="#c0c0c0" stroke-width="1"/></svg></div>
<div class="key" style="left:1254.0px;top:566.0px;width:31.6px;height:31.6px"><svg style="position:absolute;left:10.8px;top:12.6px" width="9" height="6" viewBox="0 0 9 6"><path d="M0.4 3 H8.1 M6 0.9 L8.3 3 L6 5.1" fill="none" stroke="#c0c0c0" stroke-width="1"/></svg></div>
<div class="t" style="left:10.4px;top:617px;font-size:11.9px;color:#7a7e86">Server: localhost.localdomain</div>
<div class="t" style="left:1275px;top:617px;font-size:12px;color:#7a7e86;text-decoration:underline">Pi-KVM Project</div>
</body></html>
